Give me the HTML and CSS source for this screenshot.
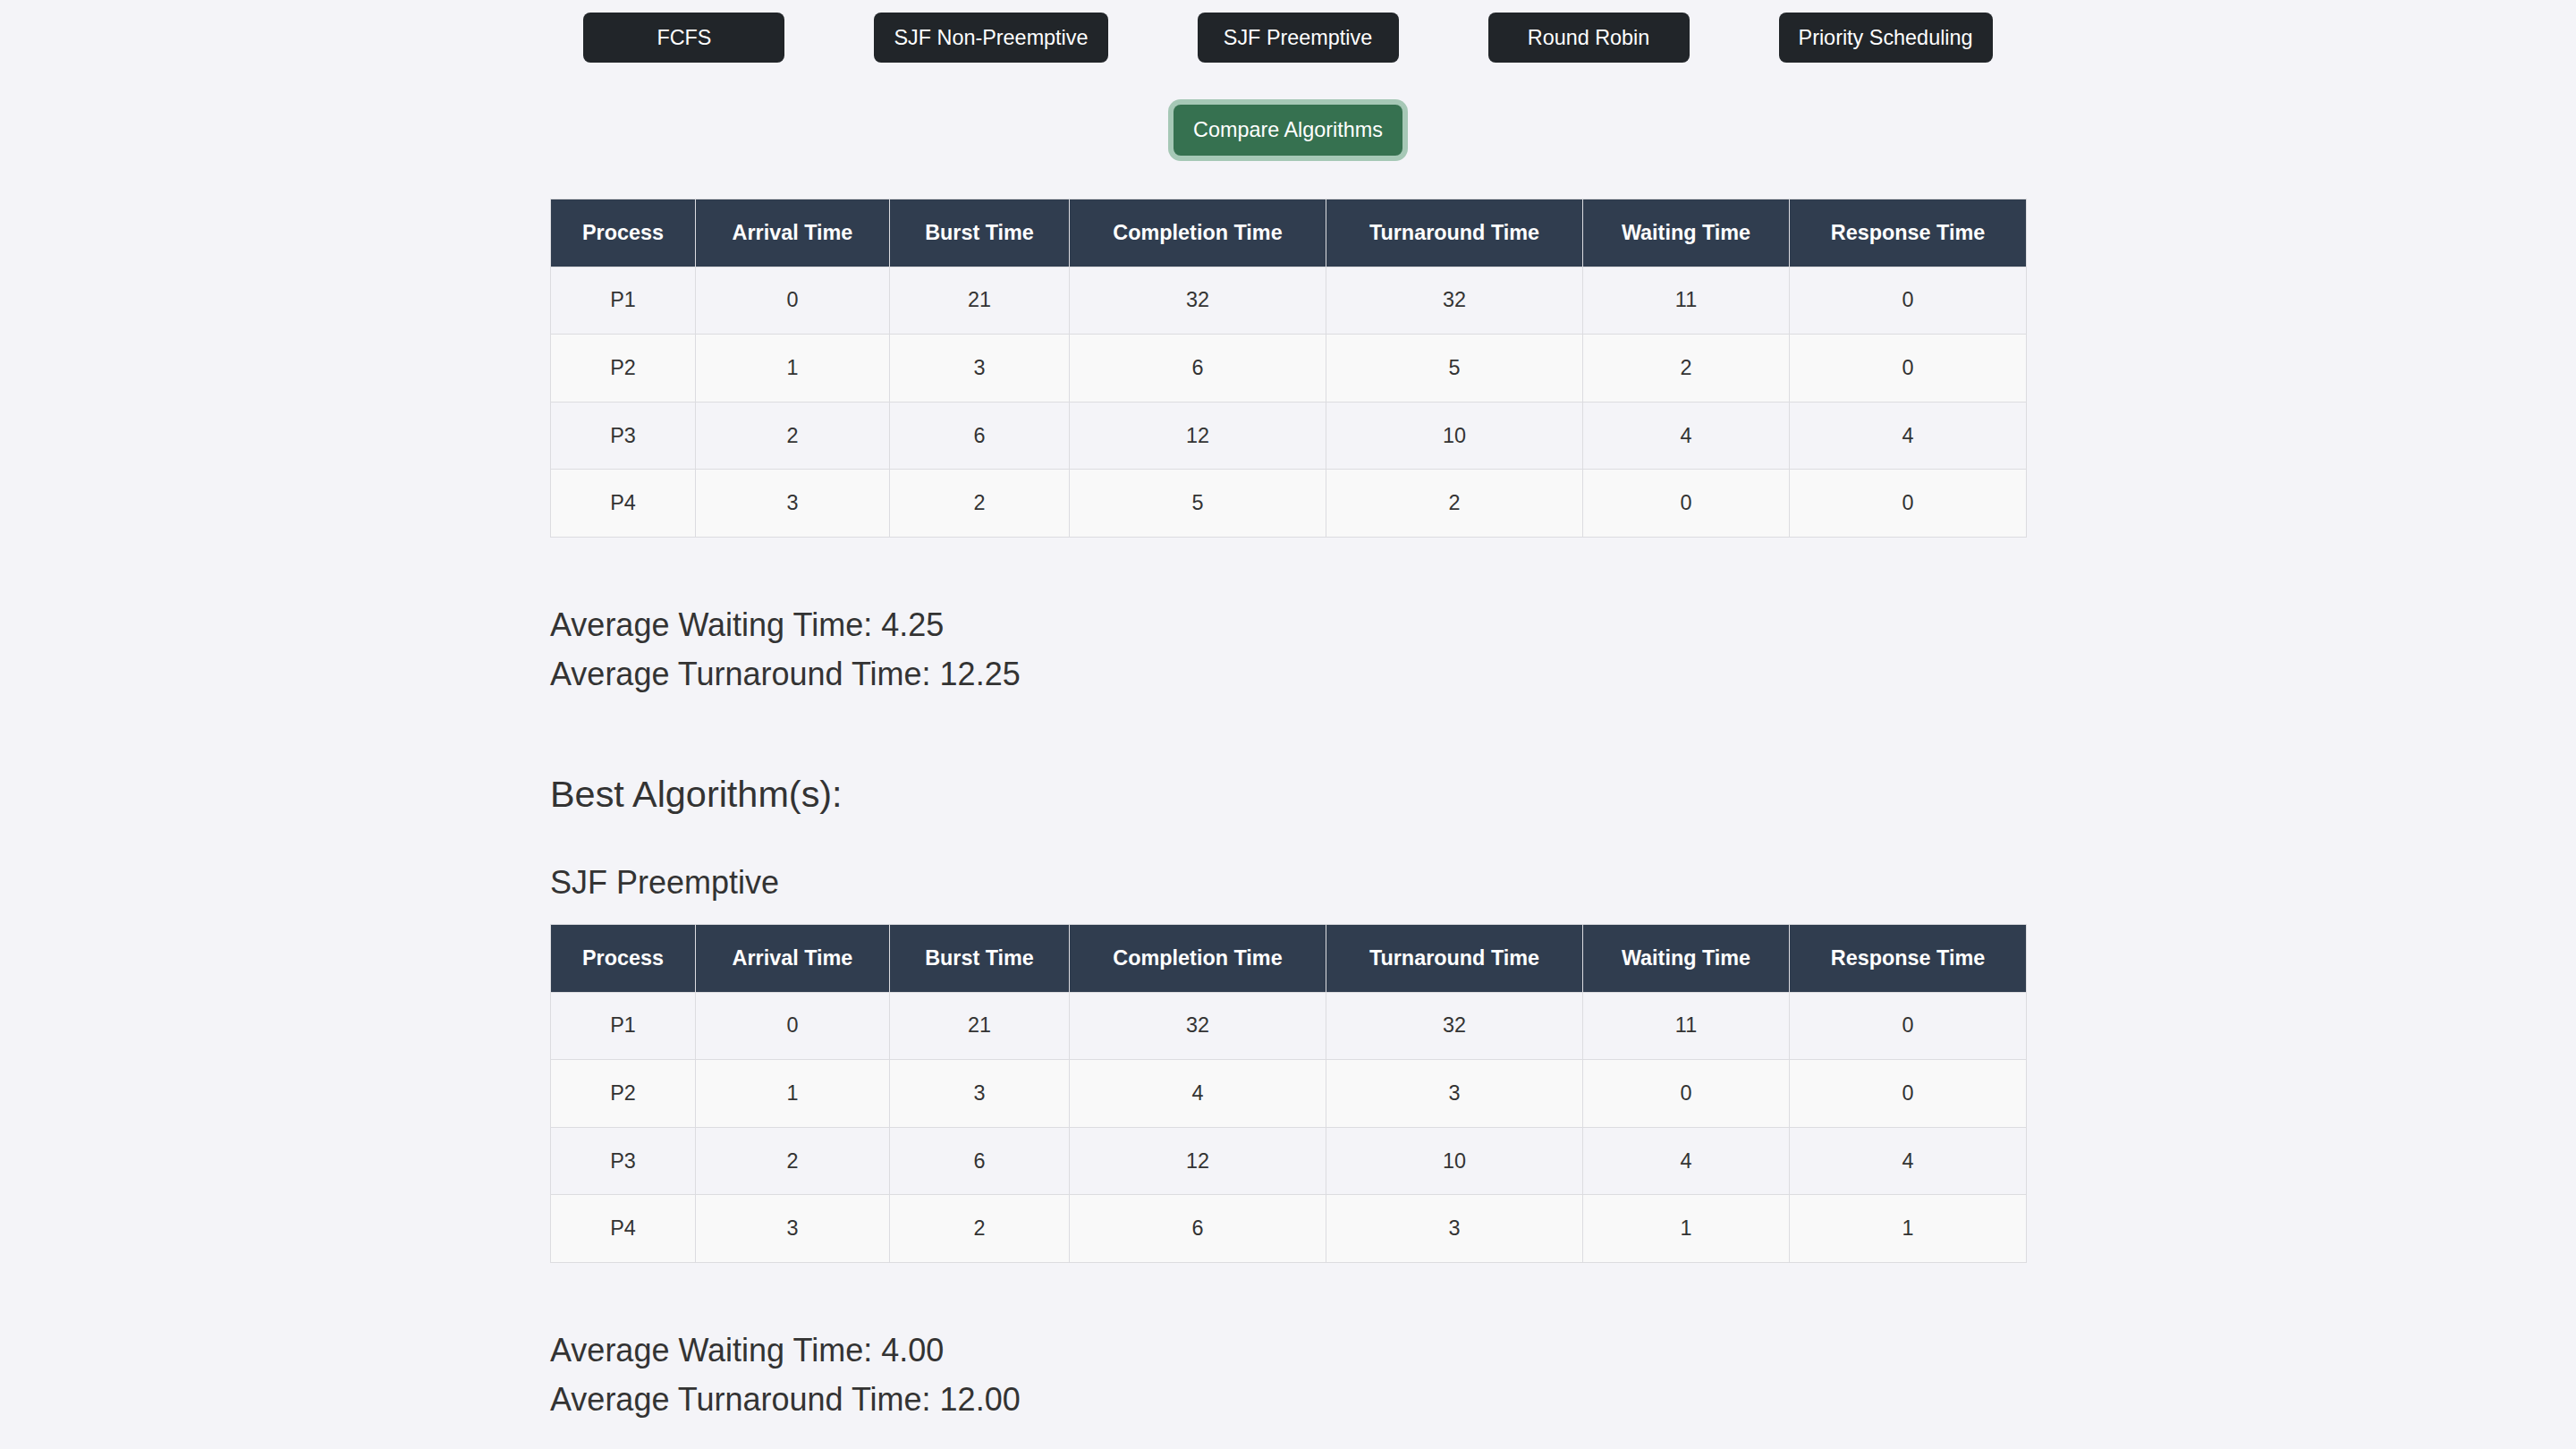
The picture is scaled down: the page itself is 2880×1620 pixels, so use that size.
FILE: index.html
```html
<!DOCTYPE html>
<html lang="en">
<head>
<meta charset="utf-8">
<title>CPU Scheduling</title>
<link rel="stylesheet" href="styles.css">
</head>
<body>
<div class="algo-bar">
  <button class="btn">FCFS</button>
  <button class="btn">SJF Non-Preemptive</button>
  <button class="btn">SJF Preemptive</button>
  <button class="btn">Round Robin</button>
  <button class="btn">Priority Scheduling</button>
</div>
<div class="compare-row">
  <button class="btn-compare">Compare Algorithms</button>
</div>
<main class="container">
  <table class="results">
    <colgroup>
      <col class="c-process"><col class="c-arrival"><col class="c-burst"><col class="c-completion"><col class="c-turnaround"><col class="c-waiting"><col class="c-response">
    </colgroup>
    <thead>
      <tr><th>Process</th><th>Arrival Time</th><th>Burst Time</th><th>Completion Time</th><th>Turnaround Time</th><th>Waiting Time</th><th>Response Time</th></tr>
    </thead>
    <tbody>
      <tr><td>P1</td><td>0</td><td>21</td><td>32</td><td>32</td><td>11</td><td>0</td></tr>
      <tr><td>P2</td><td>1</td><td>3</td><td>6</td><td>5</td><td>2</td><td>0</td></tr>
      <tr><td>P3</td><td>2</td><td>6</td><td>12</td><td>10</td><td>4</td><td>4</td></tr>
      <tr><td>P4</td><td>3</td><td>2</td><td>5</td><td>2</td><td>0</td><td>0</td></tr>
    </tbody>
  </table>
  <div class="averages">
    <div>Average Waiting Time: 4.25</div>
    <div>Average Turnaround Time: 12.25</div>
  </div>
  <h2 class="best-title">Best Algorithm(s):</h2>
  <h3 class="algo-name">SJF Preemptive</h3>
  <table class="results">
    <colgroup>
      <col class="c-process"><col class="c-arrival"><col class="c-burst"><col class="c-completion"><col class="c-turnaround"><col class="c-waiting"><col class="c-response">
    </colgroup>
    <thead>
      <tr><th>Process</th><th>Arrival Time</th><th>Burst Time</th><th>Completion Time</th><th>Turnaround Time</th><th>Waiting Time</th><th>Response Time</th></tr>
    </thead>
    <tbody>
      <tr><td>P1</td><td>0</td><td>21</td><td>32</td><td>32</td><td>11</td><td>0</td></tr>
      <tr><td>P2</td><td>1</td><td>3</td><td>4</td><td>3</td><td>0</td><td>0</td></tr>
      <tr><td>P3</td><td>2</td><td>6</td><td>12</td><td>10</td><td>4</td><td>4</td></tr>
      <tr><td>P4</td><td>3</td><td>2</td><td>6</td><td>3</td><td>1</td><td>1</td></tr>
    </tbody>
  </table>
  <div class="averages">
    <div>Average Waiting Time: 4.00</div>
    <div>Average Turnaround Time: 12.00</div>
  </div>
</main>
</body>
</html>
```
FILE: styles.css
```css
* { box-sizing: border-box; }
html, body {
  margin: 0;
  padding: 0;
  background: #f4f4f8;
  color: #333;
  font-family: "Liberation Sans", Arial, sans-serif;
}
.algo-bar {
  display: flex;
  justify-content: center;
  gap: 100px;
  padding-top: 14px;
}
.btn {
  display: inline-flex;
  align-items: center;
  justify-content: center;
  height: 56px;
  min-width: 225px;
  padding: 0 22px;
  border: none;
  border-radius: 8px;
  background: #212529;
  color: #fff;
  font-family: inherit;
  font-size: 23.4px;
  white-space: nowrap;
}
.compare-row {
  display: flex;
  justify-content: center;
  margin-top: 47px;
}
.btn-compare {
  height: 57px;
  padding: 0 22px;
  border: none;
  border-radius: 8px;
  background: #367150;
  color: #fff;
  font-family: inherit;
  font-size: 23.4px;
  box-shadow: 0 0 0 6px #a6c8b6;
  white-space: nowrap;
}
.container {
  width: 1650px;
  margin: 0 auto;
  padding-bottom: 40px;
}
.results {
  width: 100%;
  margin-top: 48px;
  border-collapse: collapse;
  table-layout: fixed;
  font-size: 23.4px;
}
.c-process { width: 162px; }
.c-arrival { width: 217px; }
.c-burst { width: 201px; }
.c-completion { width: 287px; }
.c-turnaround { width: 287px; }
.c-waiting { width: 231px; }
.c-response { width: 265px; }
.results th,
.results td {
  height: 75.6px;
  padding: 0 12px;
  border: 1px solid #dcdce0;
  text-align: center;
  line-height: 27px;
  white-space: nowrap;
}
.results th {
  background: #303d4f;
  color: #fff;
  font-weight: bold;
}
.results td {
  color: #333;
}
.results tbody tr:nth-child(even) td {
  background: #f9f9f9;
}
.averages {
  margin-top: 70px;
  font-size: 36px;
  line-height: 55px;
}
.best-title {
  margin: 84px 0 0;
  font-size: 41.4px;
  font-weight: normal;
  line-height: 1.15;
}
.algo-name {
  margin: 53px 0 0;
  font-size: 36px;
  font-weight: normal;
  line-height: 1.15;
}
.algo-name + .results {
  margin-top: 26px;
}
```
